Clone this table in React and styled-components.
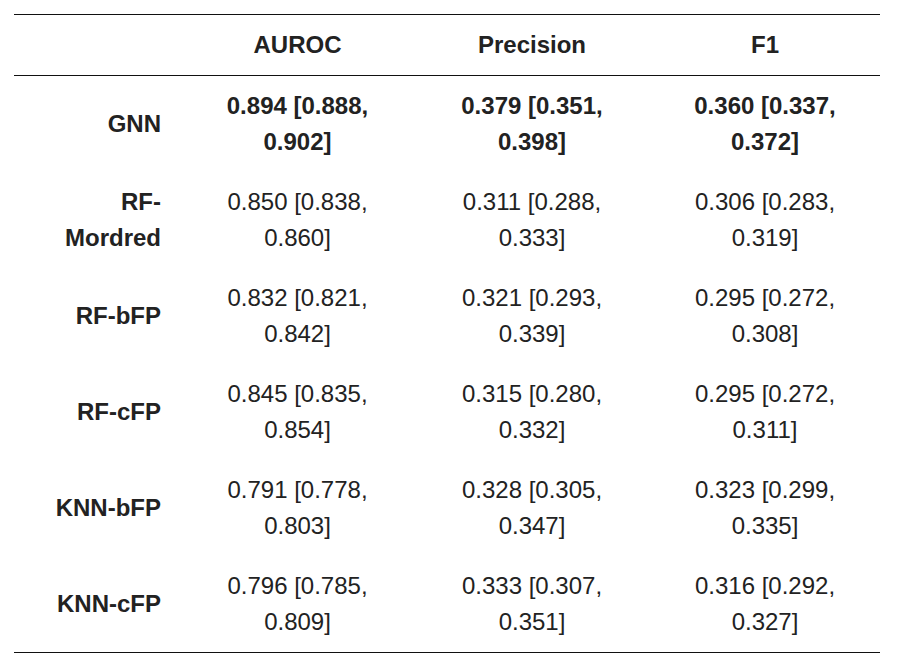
import React from "react";
import styled, { createGlobalStyle } from "styled-components";

const Global = createGlobalStyle`
  html, body { margin: 0; padding: 0; background: #fff; }
  body { font-family: "Liberation Sans", Arial, sans-serif; color: #222; }
`;

const Wrap = styled.div`
  padding: 14px 0 0 14px;
`;

const Table = styled.table`
  border-collapse: separate;
  border-spacing: 0;
  table-layout: fixed;
  width: 866px;
  border-top: 1px solid #111;
  border-bottom: 1px solid #111;
  font-size: 24px;
  line-height: 36px;
`;

const HeadCell = styled.th`
  padding: 12px 16px;
  font-weight: 700;
  text-align: center;
  border-bottom: 1px solid #111;
`;

const RowHead = styled.th`
  padding: 12px 20px 12px 12px;
  font-weight: 700;
  text-align: right;
`;

const Cell = styled.td`
  padding: 12px 16px;
  text-align: center;
  font-weight: ${(p) => (p.$best ? 700 : 400)};
`;

const cols = [167, 233, 236, 230];

const rows = [
  { name: "GNN", vals: ["0.894 [0.888, 0.902]", "0.379 [0.351, 0.398]", "0.360 [0.337, 0.372]"], best: true },
  { name: "RF-Mordred", vals: ["0.850 [0.838, 0.860]", "0.311 [0.288, 0.333]", "0.306 [0.283, 0.319]"] },
  { name: "RF-bFP", vals: ["0.832 [0.821, 0.842]", "0.321 [0.293, 0.339]", "0.295 [0.272, 0.308]"] },
  { name: "RF-cFP", vals: ["0.845 [0.835, 0.854]", "0.315 [0.280, 0.332]", "0.295 [0.272, 0.311]"] },
  { name: "KNN-bFP", vals: ["0.791 [0.778, 0.803]", "0.328 [0.305, 0.347]", "0.323 [0.299, 0.335]"] },
  { name: "KNN-cFP", vals: ["0.796 [0.785, 0.809]", "0.333 [0.307, 0.351]", "0.316 [0.292, 0.327]"] },
];

export default function App() {
  return (
    <Wrap>
      <Global />
      <Table>
        <colgroup>
          {cols.map((w, i) => (
            <col key={i} style={{ width: w }} />
          ))}
        </colgroup>
        <thead>
          <tr>
            <HeadCell></HeadCell>
            <HeadCell>AUROC</HeadCell>
            <HeadCell>Precision</HeadCell>
            <HeadCell>F1</HeadCell>
          </tr>
        </thead>
        <tbody>
          {rows.map((r) => (
            <tr key={r.name}>
              <RowHead>{r.name}</RowHead>
              {r.vals.map((v, i) => (
                <Cell key={i} $best={r.best}>{v}</Cell>
              ))}
            </tr>
          ))}
        </tbody>
      </Table>
    </Wrap>
  );
}
